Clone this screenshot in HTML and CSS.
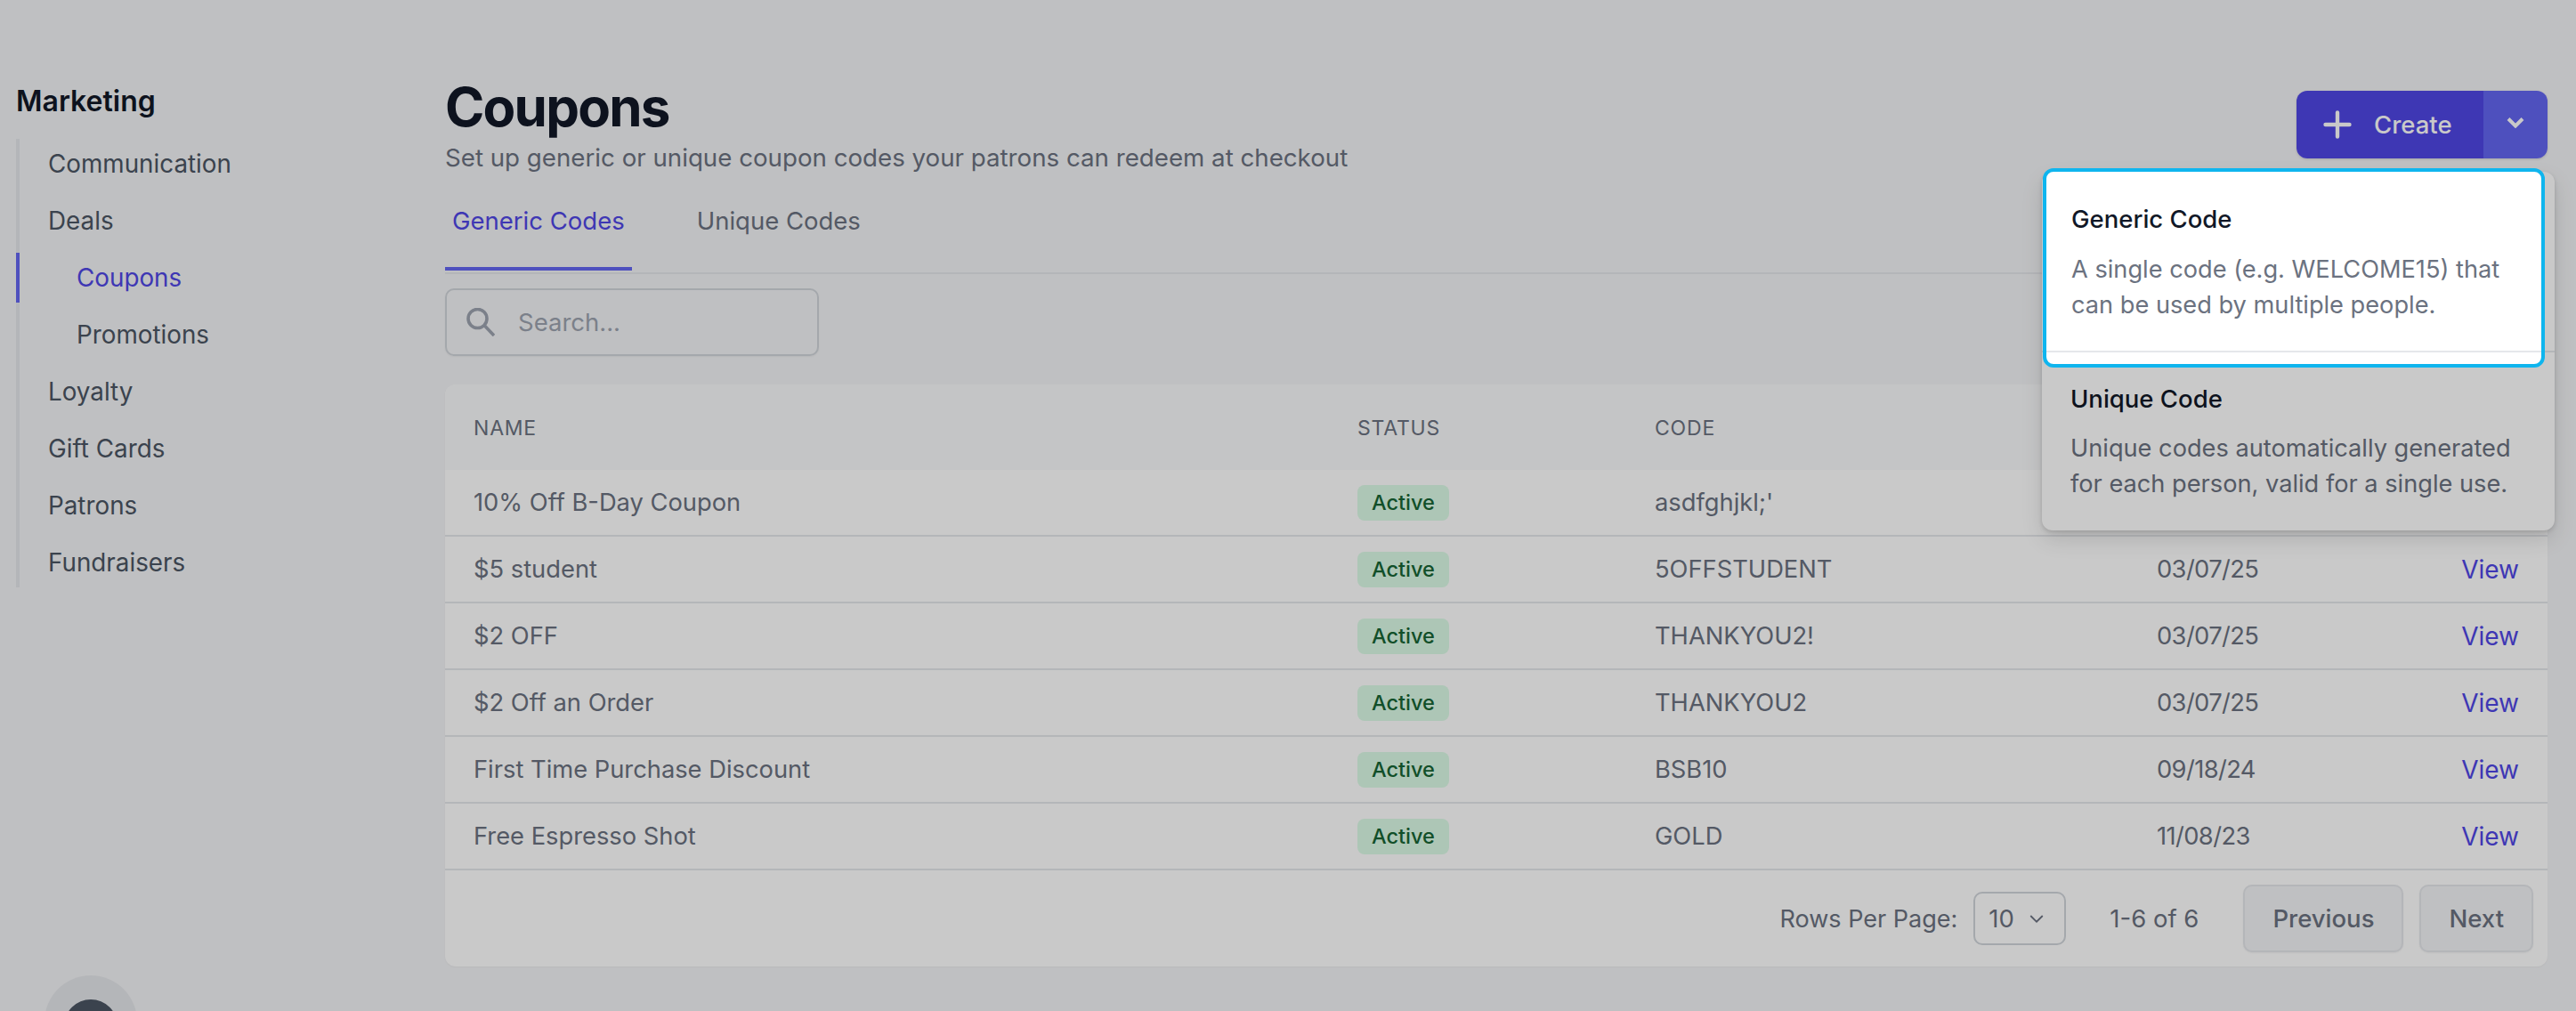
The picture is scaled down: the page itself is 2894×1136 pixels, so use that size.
FILE: index.html
```html
<!DOCTYPE html>
<html lang="en">
<head>
<meta charset="utf-8">
<title>Coupons</title>
<link rel="stylesheet" href="styles.css">
</head>
<body>
<div class="app">
  <aside class="sidebar">
    <h2 class="side-title">Marketing</h2>
    <nav class="side-nav">
      <a class="side-link">Communication</a>
      <a class="side-link">Deals</a>
      <a class="side-link sub active">Coupons</a>
      <a class="side-link sub">Promotions</a>
      <a class="side-link">Loyalty</a>
      <a class="side-link">Gift Cards</a>
      <a class="side-link">Patrons</a>
      <a class="side-link">Fundraisers</a>
    </nav>
    <div class="avatar"><div class="avatar-dot"></div></div>
  </aside>
  <main class="main">
    <header class="page-head">
      <div>
        <h1 class="title">Coupons</h1>
        <p class="subtitle">Set up generic or unique coupon codes your patrons can redeem at checkout</p>
      </div>
      <div class="create">
        <a class="create-main"><svg viewBox="0 0 32 32" fill="none" stroke="currentColor" stroke-width="4.400" stroke-linecap="round"><path d="M16 2.500v27M2.500 16h27"/></svg><span>Create</span></a>
        <a class="create-more"><svg viewBox="0 0 20 12" fill="none" stroke="currentColor" stroke-width="4"><path d="M2 1.500l8 8 8-8"/></svg></a>
      </div>
    </header>
    <div class="tabs">
      <a class="tab active">Generic Codes</a>
      <a class="tab">Unique Codes</a>
    </div>
    <div class="search">
      <svg class="search-icon" viewBox="0 0 32 32" fill="none" stroke="currentColor" stroke-width="3.600"><circle cx="12.500" cy="12" r="10.500"/><path d="M20 19.500l11 11.500"/></svg>
      <span>Search...</span>
    </div>
    <section class="card">
      <div class="row head">
        <span>NAME</span><span>STATUS</span><span>CODE</span><span></span><span></span>
      </div>
      <div class="row"><span>10% Off B-Day Coupon</span><span><b class="badge">Active</b></span><span>asdfghjkl;'</span><span></span><span></span></div>
      <div class="row"><span>$5 student</span><span><b class="badge">Active</b></span><span>5OFFSTUDENT</span><span class="date">03/07/25</span><a class="view">View</a></div>
      <div class="row"><span>$2 OFF</span><span><b class="badge">Active</b></span><span>THANKYOU2!</span><span class="date">03/07/25</span><a class="view">View</a></div>
      <div class="row"><span>$2 Off an Order</span><span><b class="badge">Active</b></span><span>THANKYOU2</span><span class="date">03/07/25</span><a class="view">View</a></div>
      <div class="row"><span>First Time Purchase Discount</span><span><b class="badge">Active</b></span><span>BSB10</span><span class="date">09/18/24</span><a class="view">View</a></div>
      <div class="row"><span>Free Espresso Shot</span><span><b class="badge">Active</b></span><span>GOLD</span><span class="date">11/08/23</span><a class="view">View</a></div>
      <footer class="pager">
        <span class="rows-label">Rows Per Page:</span>
        <span class="select">10<svg viewBox="0 0 12 12" fill="none" stroke="currentColor" stroke-width="1.200"><path d="M1.500 4l4.500 4.500L10.500 4"/></svg></span>
        <span class="range">1-6 of 6</span>
        <a class="pg-btn">Previous</a>
        <a class="pg-btn next">Next</a>
      </footer>
    </section>
  </main>
  <div class="menu">
    <div class="menu-item blank"></div>
    <div class="menu-item">
      <div class="menu-title">Unique Code</div>
      <div class="menu-text">Unique codes automatically generated<br>for each person, valid for a single use.</div>
    </div>
  </div>
</div>
<div class="scrim"></div>
<div class="focus-item">
  <div class="menu-title">Generic Code</div>
  <div class="menu-text first">A single code (e.g. WELCOME15) that<br>can be used by multiple people.</div>
  <div class="focus-rule"></div>
</div>
</body>
</html>
```
FILE: styles.css
```css
* { box-sizing: border-box; }
html, body { margin: 0; height: 1136px; overflow: hidden; }
body { background: #f3f4f6; font-family: Inter, "Liberation Sans", sans-serif; color: #4b5563; width: 2894px; }
a { display: block; }
.app { display: flex; padding-top: 92px; height: 1136px; overflow: hidden; position: relative; }

.sidebar { width: 500px; padding-left: 18px; flex: none; display: flex; flex-direction: column; }
.side-title { margin: 2px 0 22px; font-size: 32px; line-height: 40px; font-weight: 600; color: #111827; }
.side-nav { display: flex; flex-direction: column; gap: 8px; border-left: 4px solid #e5e7eb; width: 400px; flex: none; height: 504px; }
.side-link { height: 56px; padding-left: 32px; margin-left: -4px; border-left: 4px solid transparent; font-size: 27.800px; line-height: 56px; color: #4b5563; }
.side-link.sub { padding-left: 64px; }
.side-link.active { color: #4f46e5; border-left-color: #6366f1; }
.avatar { margin: 436px 0 0 32px; width: 104px; height: 104px; border-radius: 50%; background: #e5e7eb; flex: none; padding: 27px 22px; }
.avatar-dot { width: 60px; height: 60px; border-radius: 50%; background: #4b5563; }

.main { width: 2362px; flex: none; }
.page-head { height: 104px; display: flex; justify-content: space-between; align-items: flex-start; }
.title { margin: -3px 0 8px; font-size: 60px; line-height: 62px; font-weight: 700; color: #111827; letter-spacing: -1.800px; }
.subtitle { margin: 0; font-size: 27.700px; line-height: 36px; color: #6b7280; }
.create { margin-top: 10px; width: 282px; height: 76px; display: flex; border-radius: 12px; overflow: hidden; box-shadow: 0 1px 3px rgba(0,0,0,.15); flex: none; }
.create-main { flex: 1; background: #4f46e5; display: flex; align-items: center; padding-left: 30px; gap: 25px; color: #fff; font-size: 27.500px; font-weight: 500; }
.create-main svg { width: 32px; height: 32px; }
.create-more { width: 72px; background: #6366f1; display: flex; align-items: center; justify-content: center; color: #fff; }
.create-more svg { width: 20px; height: 12px; margin-bottom: 4px; }

.tabs { display: flex; border-bottom: 2px solid #e5e7eb; height: 112px; }
.tab { padding: 32px 8px 0; font-size: 27.500px; line-height: 40px; color: #6b7280; }
.tab.active { color: #4f46e5; border-bottom: 4px solid #6366f1; height: 108px; margin-right: 65px; }

.search { margin-top: 16px; width: 420px; height: 76px; border: 2px solid #d1d5db; border-radius: 10px; display: flex; align-items: center; padding-left: 22px; gap: 26px; color: #9ca3af; font-size: 27.500px; box-shadow: 0 1px 2px rgba(0,0,0,.05); }
.search-icon { width: 32px; height: 32px; }

.card { margin-top: 32px; background: #fff; border-radius: 12px; overflow: hidden; box-shadow: 0 1px 2px rgba(0,0,0,.04); }
.row { display: grid; grid-template-columns: 993px 334px 564px 1fr auto; align-items: center; height: 75px; padding: 0 32px; font-size: 27.300px; color: #6b7280; border-bottom: 2px solid #e5e7eb; }
.row.head { height: 96px; background: #f9fafb; border-bottom: 0; padding-top: 2px; font-size: 23px; letter-spacing: .8px; }
.date { letter-spacing: -.6px; }
.badge { display: block; width: fit-content; font-weight: 500; font-size: 23.500px; line-height: 40px; padding: 0 16px; background: #dcfce7; color: #166534; border-radius: 8px; }
.view { color: #4f46e5; font-size: 28px; }

.pager { display: flex; align-items: center; justify-content: flex-end; height: 108px; padding-right: 16px; font-size: 27.500px; color: #6b7280; }
.rows-label { font-size: 27px; }
.select { width: 104px; height: 60px; border: 2px solid #d1d5db; border-radius: 10px; display: flex; align-items: center; gap: 16px; padding-left: 15px; margin-left: 18px; }
.select svg { width: 18px; height: 18px; }
.range { margin: 0 50px 0 49px; }
.pg-btn { height: 76px; line-height: 72px; padding: 0 31px; border: 2px solid #e5e7eb; border-radius: 10px; background: #f3f4f6; font-weight: 500; box-shadow: 0 1px 2px rgba(0,0,0,.05); }
.pg-btn.next { margin-left: 18px; }

.menu { position: absolute; left: 2294px; top: 193px; width: 576px; background: #fff; border-radius: 12px; box-shadow: 0 10px 24px rgba(0,0,0,.12), 0 2px 5px rgba(0,0,0,.14); }
.menu-item { padding: 32px; height: 200px; }
.menu-item.blank { height: 203px; border-bottom: 2px solid #e5e7eb; }
.menu-title { font-size: 27.500px; line-height: 40px; color: #111827; font-weight: 500; }
.menu-text { margin-top: 16px; font-size: 27.200px; line-height: 40px; color: #6b7280; white-space: nowrap; }
.menu-text.first { margin-top: 17px; }

.scrim { position: fixed; inset: 0; background: rgba(0,0,0,.21); }
.focus-item { position: absolute; left: 2295px; top: 189px; width: 564px; height: 224px; background: #fff; border: 4px solid #0fb5ee; border-radius: 12px; padding: 33px 28px 0; }
.focus-rule { position: absolute; left: 0; right: 0; top: 201px; height: 2px; background: #e5e7eb; }
```
